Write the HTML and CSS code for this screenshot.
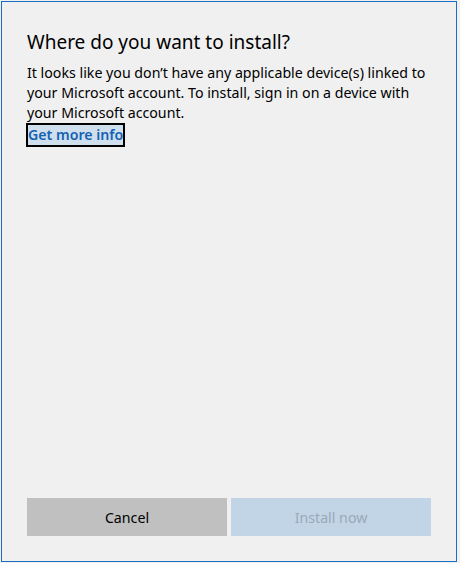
FILE: index.html
```html
<!DOCTYPE html>
<html lang="en">
<head>
<meta charset="utf-8">
<title>Where do you want to install?</title>
<link rel="stylesheet" href="styles.css">
</head>
<body>
<div class="dialog">
  <div class="content">
    <h1 class="title">Where do you want to install?</h1>
    <p class="message">It looks like you don’t have any applicable device(s) linked to your Microsoft account. To install, sign in on a device with your Microsoft account.</p>
    <a class="link" href="#">Get more info</a>
  </div>
  <div class="actions">
    <button class="btn btn-cancel">Cancel</button>
    <button class="btn btn-primary" disabled>Install now</button>
  </div>
</div>
</body>
</html>
```

FILE: styles.css
```css
html, body {
  margin: 0;
  padding: 0;
  background: #f0f0f0;
}
body {
  font-family: "Noto Sans", "Open Sans", sans-serif;
  color: #000;
}
.dialog {
  box-sizing: border-box;
  margin: 1px 0 0 1px;
  width: 456px;
  height: 561px;
  border: 1px solid #1c6ec4;
  display: flex;
  flex-direction: column;
  padding: 0 25px 25px 25px;
}
.content {
  flex: 1;
}
.title {
  font-size: 19px;
  font-weight: 400;
  line-height: 26px;
  margin: 27px 0 8px 0;
}
.message {
  font-size: 14.2px;
  line-height: 20px;
  margin: 0;
}
.link {
  display: inline-block;
  margin: -4px 0 0 -1px;
  font-size: 14.2px;
  line-height: 20px;
  font-weight: 600;
  color: #1462b3;
  text-decoration: none;
  background: #cfdfed;
  border: 2px solid #000;
}
.actions {
  display: flex;
  gap: 4px;
}
.btn {
  width: 200px;
  height: 38px;
  border: none;
  font-family: "Noto Sans", "Open Sans", sans-serif;
  font-size: 14.2px;
  padding: 0;
}
.btn-cancel {
  background: #c0c0c0;
  color: #000;
}
.btn-primary {
  background: #c1d5e7;
  color: #9aa9b8;
}
```
